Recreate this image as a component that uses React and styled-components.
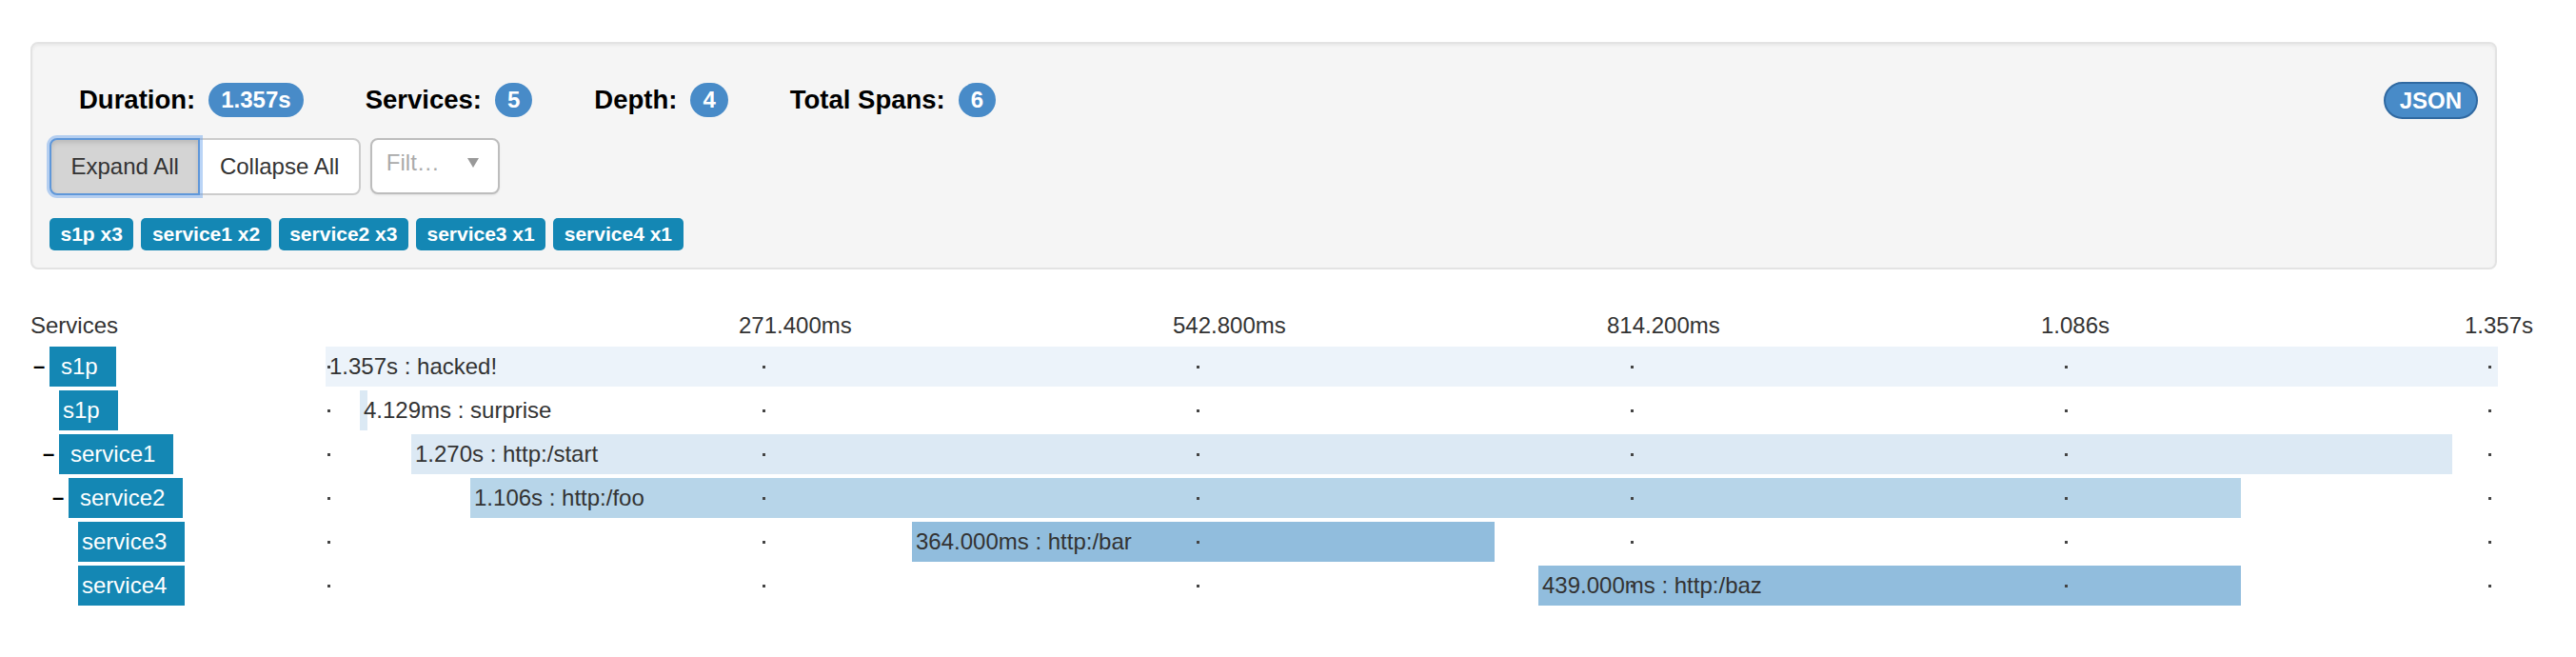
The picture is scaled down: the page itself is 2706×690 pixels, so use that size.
import React from 'react'
import styled, { createGlobalStyle } from 'styled-components'

const TOTAL = 1357
const TRACK = 2282

const stats = [
  { label: 'Duration:', value: '1.357s' },
  { label: 'Services:', value: '5' },
  { label: 'Depth:', value: '4' },
  { label: 'Total Spans:', value: '6' },
]

const tags = ['s1p x3', 'service1 x2', 'service2 x3', 'service3 x1', 'service4 x1']

const ticks = [
  { x: 3, label: '' },
  { x: 460, label: '271.400ms' },
  { x: 916, label: '542.800ms' },
  { x: 1372, label: '814.200ms' },
  { x: 1828, label: '1.086s' },
  { x: 2273, label: '1.357s' },
]

const spans = [
  { service: 's1p', depth: 0, parent: true, start: 0, duration: 1357, text: '1.357s : hacked!', color: '#ecf3fa' },
  { service: 's1p', depth: 1, parent: false, start: 21.4, duration: 4.129, text: '4.129ms : surprise', color: '#dbe9f4' },
  { service: 'service1', depth: 1, parent: true, start: 53.5, duration: 1275, text: '1.270s : http:/start', color: '#dce9f4' },
  { service: 'service2', depth: 2, parent: true, start: 90.4, duration: 1106, text: '1.106s : http:/foo', color: '#b7d5e9' },
  { service: 'service3', depth: 3, parent: false, start: 366.3, duration: 364, text: '364.000ms : http:/bar', color: '#91bddd' },
  { service: 'service4', depth: 3, parent: false, start: 757.6, duration: 439, text: '439.000ms : http:/baz', color: '#91bddd' },
]

export default function App() {
  return (
    <>
      <GlobalStyle />
      <Page>
        <Well>
          <StatsBar>
            {stats.map(s => (
              <Stat key={s.label}>
                {s.label}
                <Badge>{s.value}</Badge>
              </Stat>
            ))}
            <JsonBadge>JSON</JsonBadge>
          </StatsBar>
          <Controls>
            <ButtonGroup>
              <Button $active $first>Expand All</Button>
              <Button $last>Collapse All</Button>
            </ButtonGroup>
            <FilterSelect>
              <Placeholder>Filt…</Placeholder>
              <Caret />
            </FilterSelect>
          </Controls>
          <TagList>
            {tags.map(t => <Tag key={t}>{t}</Tag>)}
          </TagList>
        </Well>

        <Timeline>
          <HeaderRow>
            <HeaderTitle>Services</HeaderTitle>
            <Axis>
              {ticks.filter(t => t.label).map(t => (
                <TickLabel key={t.label} style={{ left: t.x - 26 }}>{t.label}</TickLabel>
              ))}
            </Axis>
          </HeaderRow>
          {spans.map((s, i) => (
            <SpanRow key={i}>
              <ServiceCell $depth={s.depth} $parent={s.parent}>
                {s.parent && <Toggle>–</Toggle>}
                <ServiceBox $parent={s.parent}>{s.service}</ServiceBox>
              </ServiceCell>
              <Track>
                <Bar
                  $color={s.color}
                  style={{
                    left: (s.start / TOTAL) * TRACK,
                    width: Math.max(8, (s.duration / TOTAL) * TRACK),
                  }}
                >
                  {s.text}
                </Bar>
                {ticks.map(t => <TickDot key={t.x} style={{ left: t.x - 1 }} />)}
              </Track>
            </SpanRow>
          ))}
        </Timeline>
      </Page>
    </>
  )
}

const GlobalStyle = createGlobalStyle`
  body {
    margin: 0;
    background: #fff;
    font-family: "Liberation Sans", Arial, Helvetica, sans-serif;
    color: #333;
  }
`

const Page = styled.div`
  padding: 44px 83px 40px 32px;
`

const Well = styled.div`
  background-color: #f5f5f5;
  border: 2px solid #e3e3e3;
  border-radius: 8px;
  padding: 18px;
  box-shadow: inset 0 2px 3px rgba(0, 0, 0, 0.05);
`

const StatsBar = styled.div`
  display: flex;
  align-items: center;

  height: 40px;
  margin-top: 21px;
  padding-left: 31px;
`

const Stat = styled.div`
  display: flex;
  align-items: center;

  margin-right: 65px;

  font-size: 27.5px;
  font-weight: bold;
  color: #000;
`

const Badge = styled.span`
  display: inline-block;

  height: 36px;
  margin-left: 14px;
  padding: 0 13px;

  background-color: #488bc8;
  border-radius: 18px;

  font-size: 24px;
  font-weight: bold;
  line-height: 36px;
  color: #fff;
`

const JsonBadge = styled(Badge)`
  height: 35px;
  margin-left: auto;
  padding: 0 15px;

  border: 2px solid #3069a1;
  border-radius: 20px;

  line-height: 35px;
`

const Controls = styled.div`
  display: flex;

  height: 60px;
  margin-top: 20px;
`

const ButtonGroup = styled.div`
  display: flex;
`

const Button = styled.button`
  position: relative;
  z-index: ${p => (p.$active ? 2 : 1)};

  height: 60px;
  margin-left: ${p => (p.$first ? 0 : '-2px')};
  padding: 0 20.5px;

  background-color: ${p => (p.$active ? '#d4d4d4' : '#fff')};
  border: 2px solid ${p => (p.$active ? '#5f97d9' : '#ccc')};
  border-radius: ${p => (p.$first ? '8px 0 0 8px' : '0 8px 8px 0')};
  box-shadow: ${p => (p.$active
    ? '0 0 0 3px rgba(102, 160, 235, 0.45), inset 0 3px 5px rgba(0, 0, 0, 0.12)'
    : 'none')};

  font-family: inherit;
  font-size: 24px;
  line-height: 56px;
  color: #333;
`

const FilterSelect = styled.div`
  display: flex;
  align-items: center;
  justify-content: space-between;
  box-sizing: border-box;

  width: 136px;
  height: 59px;
  margin-left: 10px;
  padding: 0 20px 8px 15px;

  background-color: #fff;
  border: 2px solid #bdbdbd;
  border-radius: 8px;
  box-shadow: 0 1px 2px rgba(0, 0, 0, 0.08);
`

const Placeholder = styled.span`
  font-size: 24px;
  color: #aaa;
`

const Caret = styled.span`
  width: 0;
  height: 0;

  border-left: 6px solid transparent;
  border-right: 6px solid transparent;
  border-top: 10px solid #999;
`

const TagList = styled.div`
  display: flex;
  gap: 8px;

  margin-top: 24px;
`

const Tag = styled.span`
  height: 34px;
  padding: 0 11.5px;

  background-color: #1487b4;
  border-radius: 5px;

  font-size: 21px;
  font-weight: bold;
  line-height: 34px;
  color: #fff;
`

const Timeline = styled.div`
  width: 2592px;
  margin-top: 45px;
`

const HeaderRow = styled.div`
  display: grid;
  grid-template-columns: 310px ${TRACK}px;

  height: 28px;
  margin-bottom: 8px;

  font-size: 24px;
  line-height: 28px;
  color: #333;
`

const HeaderTitle = styled.div``

const Axis = styled.div`
  position: relative;
`

const TickLabel = styled.span`
  position: absolute;
  top: 0;

  white-space: nowrap;
`

const SpanRow = styled.div`
  display: grid;
  grid-template-columns: 310px ${TRACK}px;

  height: 42px;
  margin-bottom: 4px;
`

const ServiceCell = styled.div`
  display: flex;
  align-items: center;

  padding-left: ${p => 20 + p.$depth * 10 - (p.$parent ? 17 : 0)}px;
`

const Toggle = styled.span`
  width: 17px;

  font-size: 22px;
  font-weight: bold;
  color: #000;
`

const ServiceBox = styled.span`
  height: 42px;
  padding: 0 19px 0 ${p => (p.$parent ? 12 : 4)}px;

  background-color: #1487b4;

  font-size: 24px;
  line-height: 42px;
  color: #fff;
  white-space: nowrap;
`

const Track = styled.div`
  position: relative;
  height: 42px;
`

const Bar = styled.div`
  position: absolute;
  top: 0;
  bottom: 0;
  box-sizing: border-box;

  padding-left: 4px;

  background-color: ${p => p.$color};

  font-size: 24px;
  line-height: 42px;
  color: #333;
  white-space: nowrap;
`

const TickDot = styled.span`
  position: absolute;
  top: 20px;
  z-index: 1;

  width: 3px;
  height: 3px;

  background-color: #444;
`
